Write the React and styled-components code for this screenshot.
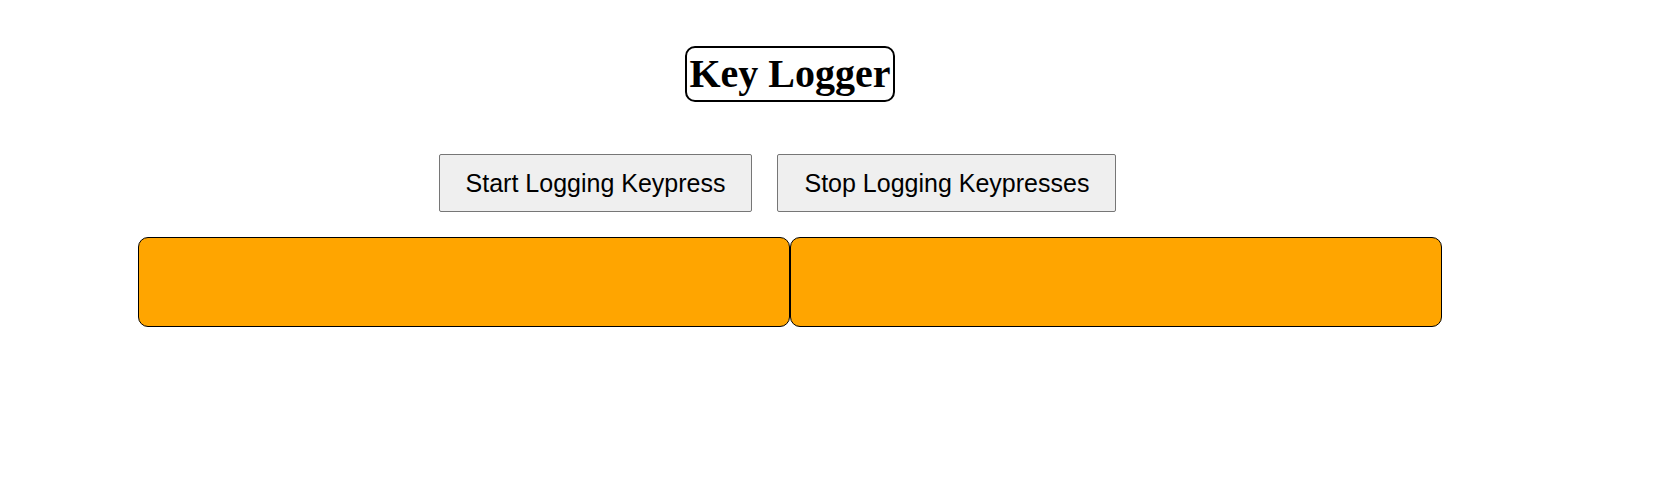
import React from "react";
import styled, { createGlobalStyle } from "styled-components";

const GlobalStyle = createGlobalStyle`
  body {
    margin: 0;
    background: #fff;
    font-family: "Liberation Serif", "Times New Roman", serif;
  }
`;

const Page = styled.main`
  width: 1580px;
  display: flex;
  flex-direction: column;
  align-items: center;
`;

const Title = styled.h1`
  margin: 46px 0 0;
  padding: 2px 2px 3px;
  font-family: "Liberation Serif", "Times New Roman", serif;
  font-size: 40px;
  font-weight: bold;
  color: #000;
  border: 2px solid #000;
  border-radius: 10px;
`;

const Controls = styled.div`
  display: flex;
  margin-top: 52px;
`;

const Button = styled.button`
  margin-right: 25px;
  padding: 14px 26px 13px;
  font-family: "Liberation Sans", Arial, sans-serif;
  font-size: 25px;
  color: #000;
  background: #efefef;
  border: 1px solid #767676;
  border-radius: 2px;
`;

const Panels = styled.div`
  display: flex;
  margin-top: 25px;
`;

const Panel = styled.div`
  width: 652px;
  height: 90px;
  box-sizing: border-box;
  background: orange;
  border: 1px solid #000;
  border-radius: 10px;
`;

export default function App() {
  return (
    <>
      <GlobalStyle />
      <Page>
        <Title>Key Logger</Title>
        <Controls>
          <Button>Start Logging Keypress</Button>
          <Button>Stop Logging Keypresses</Button>
        </Controls>
        <Panels>
          <Panel />
          <Panel />
        </Panels>
      </Page>
    </>
  );
}
